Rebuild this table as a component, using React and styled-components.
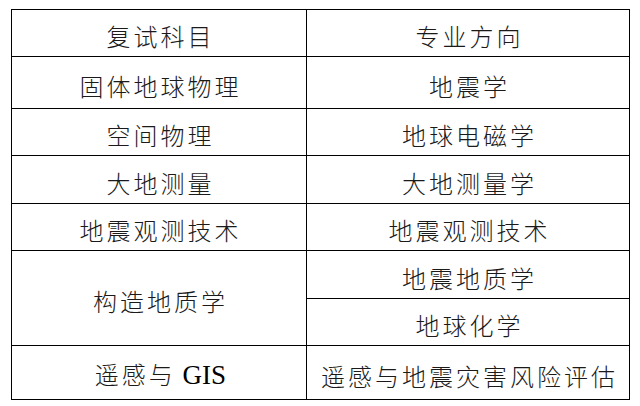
import styled, { createGlobalStyle } from 'styled-components';

const GlobalStyle = createGlobalStyle`
  html, body {
    margin: 0;
    padding: 0;
    background: #fff;
  }
`;

const Page = styled.div`
  width: 640px;
  height: 406px;
  padding: 9px 0 0 11px;
  box-sizing: border-box;
  background: #fff;
`;

const Table = styled.table`
  border-collapse: collapse;
  table-layout: fixed;
  width: 618px;
  border: 1.5px solid #000;
`;

const Row = styled.tr`
  height: ${({ $h }) => $h}px;
`;

const Cell = styled.td`
  border: 1.5px solid #000;
  padding: 6px 0 0 3px;
  box-sizing: border-box;
  text-align: center;
  vertical-align: middle;
  font-family: "Noto Sans CJK SC", "Liberation Serif", serif;
  font-weight: 300;
  font-size: 24px;
  letter-spacing: 3px;
  color: #1a1a1a;
  line-height: 1;
  white-space: nowrap;
`;

const Latin = styled.span`
  font-family: "Liberation Serif", "Times New Roman", serif;
  font-weight: 400;
  font-size: 27px;
  letter-spacing: 0;
  color: #000;
`;

const rows = [
  { h: 47, left: '复试科目', right: '专业方向' },
  { h: 52, left: '固体地球物理', right: '地震学' },
  { h: 47, left: '空间物理', right: '地球电磁学' },
  { h: 48, left: '大地测量', right: '大地测量学' },
  { h: 47, left: '地震观测技术', right: '地震观测技术' },
  { h: 48, left: '构造地质学', span: 2, right: '地震地质学' },
  { h: 47, right: '地球化学' },
  { h: 54, left: <>遥感与<Latin> GIS</Latin></>, right: '遥感与地震灾害风险评估' },
];

export default function App() {
  return (
    <Page>
      <GlobalStyle />
      <Table>
        <colgroup>
          <col style={{ width: 295 }} />
          <col style={{ width: 323 }} />
        </colgroup>
        <tbody>
          {rows.map((r, i) => (
            <Row key={i} $h={r.h}>
              {r.left && <Cell rowSpan={r.span || 1}>{r.left}</Cell>}
              <Cell>{r.right}</Cell>
            </Row>
          ))}
        </tbody>
      </Table>
    </Page>
  );
}
